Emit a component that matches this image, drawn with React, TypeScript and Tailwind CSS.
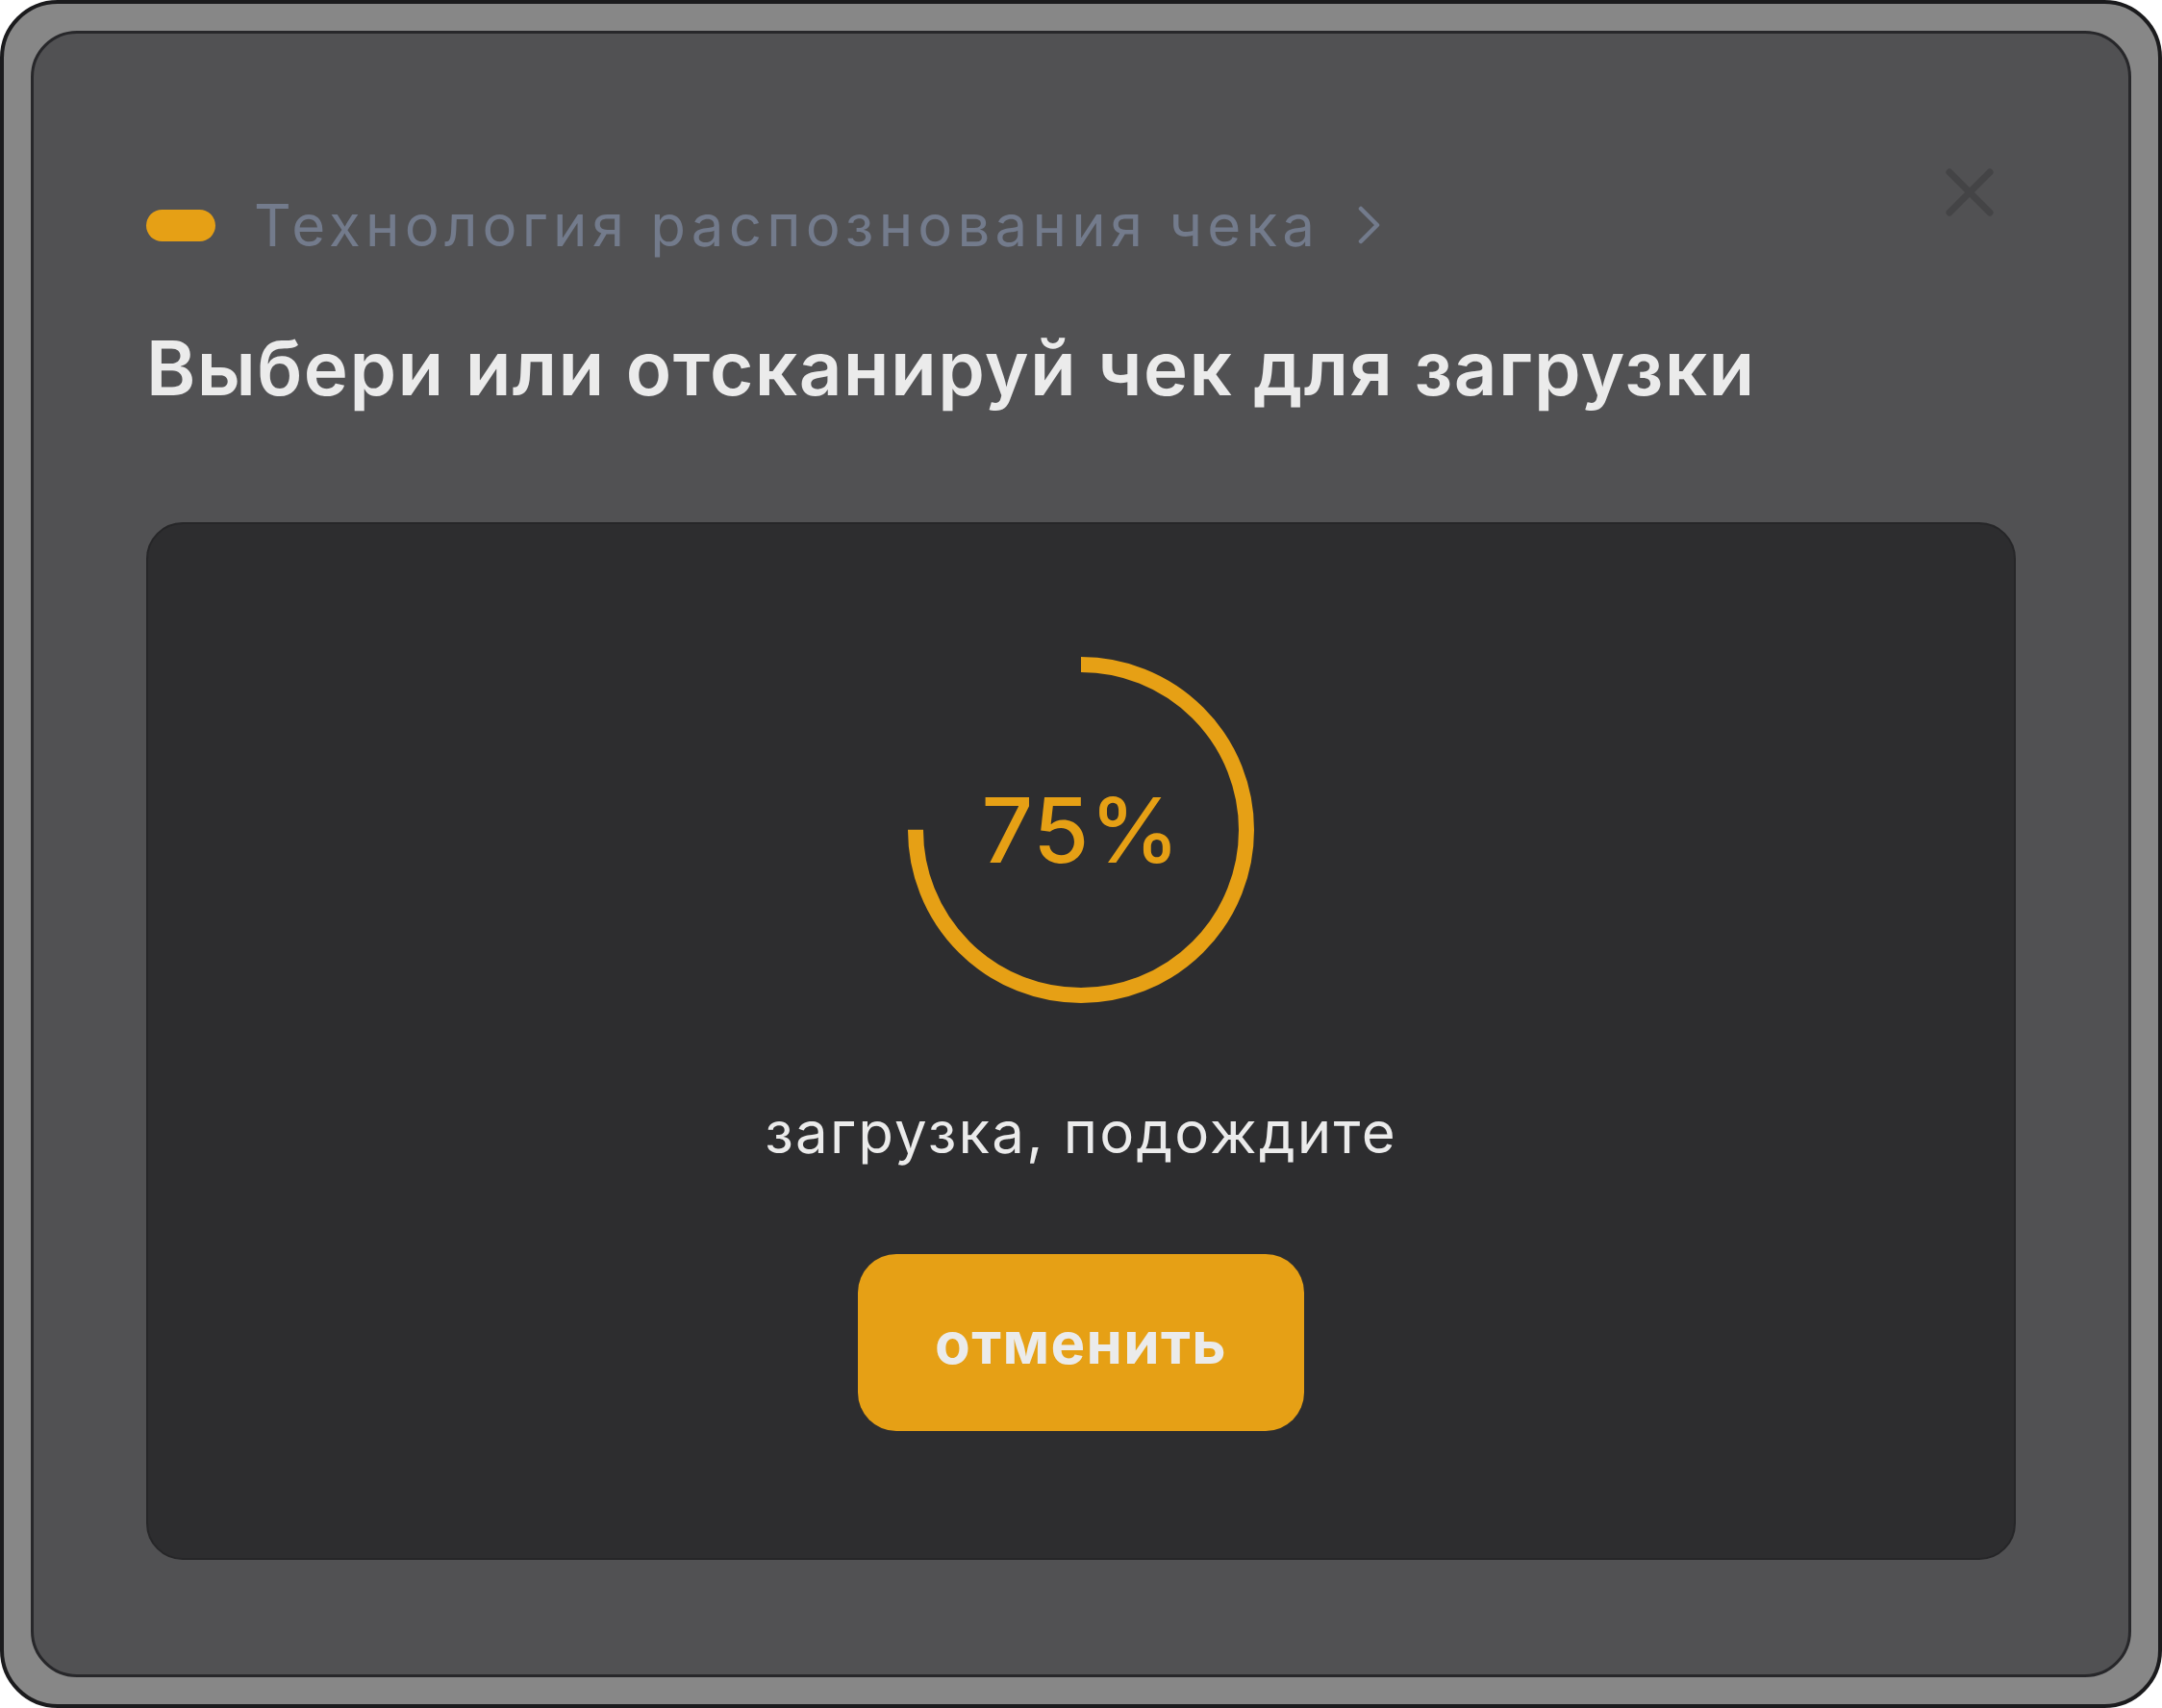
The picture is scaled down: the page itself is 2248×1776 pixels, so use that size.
import React from 'react'

const font = { fontFamily: 'Inter, "Noto Sans", sans-serif' }

function ProgressRing({ value }: { value: number }) {
  const r = 172
  const c = 2 * Math.PI * r
  return (
    <div className="relative w-[360px] h-[360px]">
      <svg width="360" height="360" viewBox="0 0 360 360" className="-rotate-90">
        <circle
          cx="180"
          cy="180"
          r={r}
          fill="none"
          stroke="#e6a015"
          strokeWidth="16"
          strokeDasharray={`${(c * value) / 100} ${c}`}
        />
      </svg>
      <div className="absolute inset-0 flex items-center justify-center">
        <span className="text-[94px] leading-none font-medium text-[#e6a015] tracking-[1px]">{value}%</span>
      </div>
    </div>
  )
}

export default function App() {
  return (
    <div style={font} className="w-[2248px] h-[1776px] rounded-[60px] border-4 border-[#1b1b1d] bg-[#878787] p-[28px]">
      <div className="relative h-full rounded-[48px] border-[3px] border-[#27272a] bg-[#515153] px-[117px] pt-[163px]">
        <button className="absolute top-[140px] right-[140px] w-[50px] h-[50px]">
          <svg width="50" height="50" viewBox="0 0 50 50" fill="none" stroke="#444446" strokeWidth="7" strokeLinecap="round">
            <path d="M4 4 L46 46 M46 4 L4 46" />
          </svg>
        </button>

        {/* breadcrumb */}
        <div className="flex items-center h-[72px] text-[#737b8c]">
          <span className="w-[72px] h-[33px] rounded-full bg-[#e6a015]" />
          <span className="ml-[40px] text-[60px] leading-[72px] tracking-[5.2px]">Технология распознования чека</span>
          <svg className="ml-[40px]" width="24" height="40" viewBox="0 0 24 40" fill="none" stroke="#737b8c" strokeWidth="4.5" strokeLinecap="round" strokeLinejoin="round">
            <path d="M3 3 L20 20 L3 37" />
          </svg>
        </div>

        <h1 className="mt-[65px] text-[78px] leading-[96px] font-semibold text-[#ebebeb] tracking-[1.4px]">
          Выбери или отсканируй чек для загрузки
        </h1>

        <div className="mt-[112px] h-[1079px] rounded-[38px] border-2 border-[#262628] bg-[#2d2d2f] flex flex-col items-center pt-[138px]">
          <ProgressRing value={75} />
          <p className="mt-[98px] text-[60px] leading-[72px] text-[#ebebeb] tracking-[2.2px]">загрузка, подождите</p>
          <button className="mt-[91px] w-[464px] h-[184px] rounded-[40px] bg-[#e6a015] text-[60px] font-bold text-[#ebebeb] tracking-[1.3px]">
            отменить
          </button>
        </div>
      </div>
    </div>
  )
}
